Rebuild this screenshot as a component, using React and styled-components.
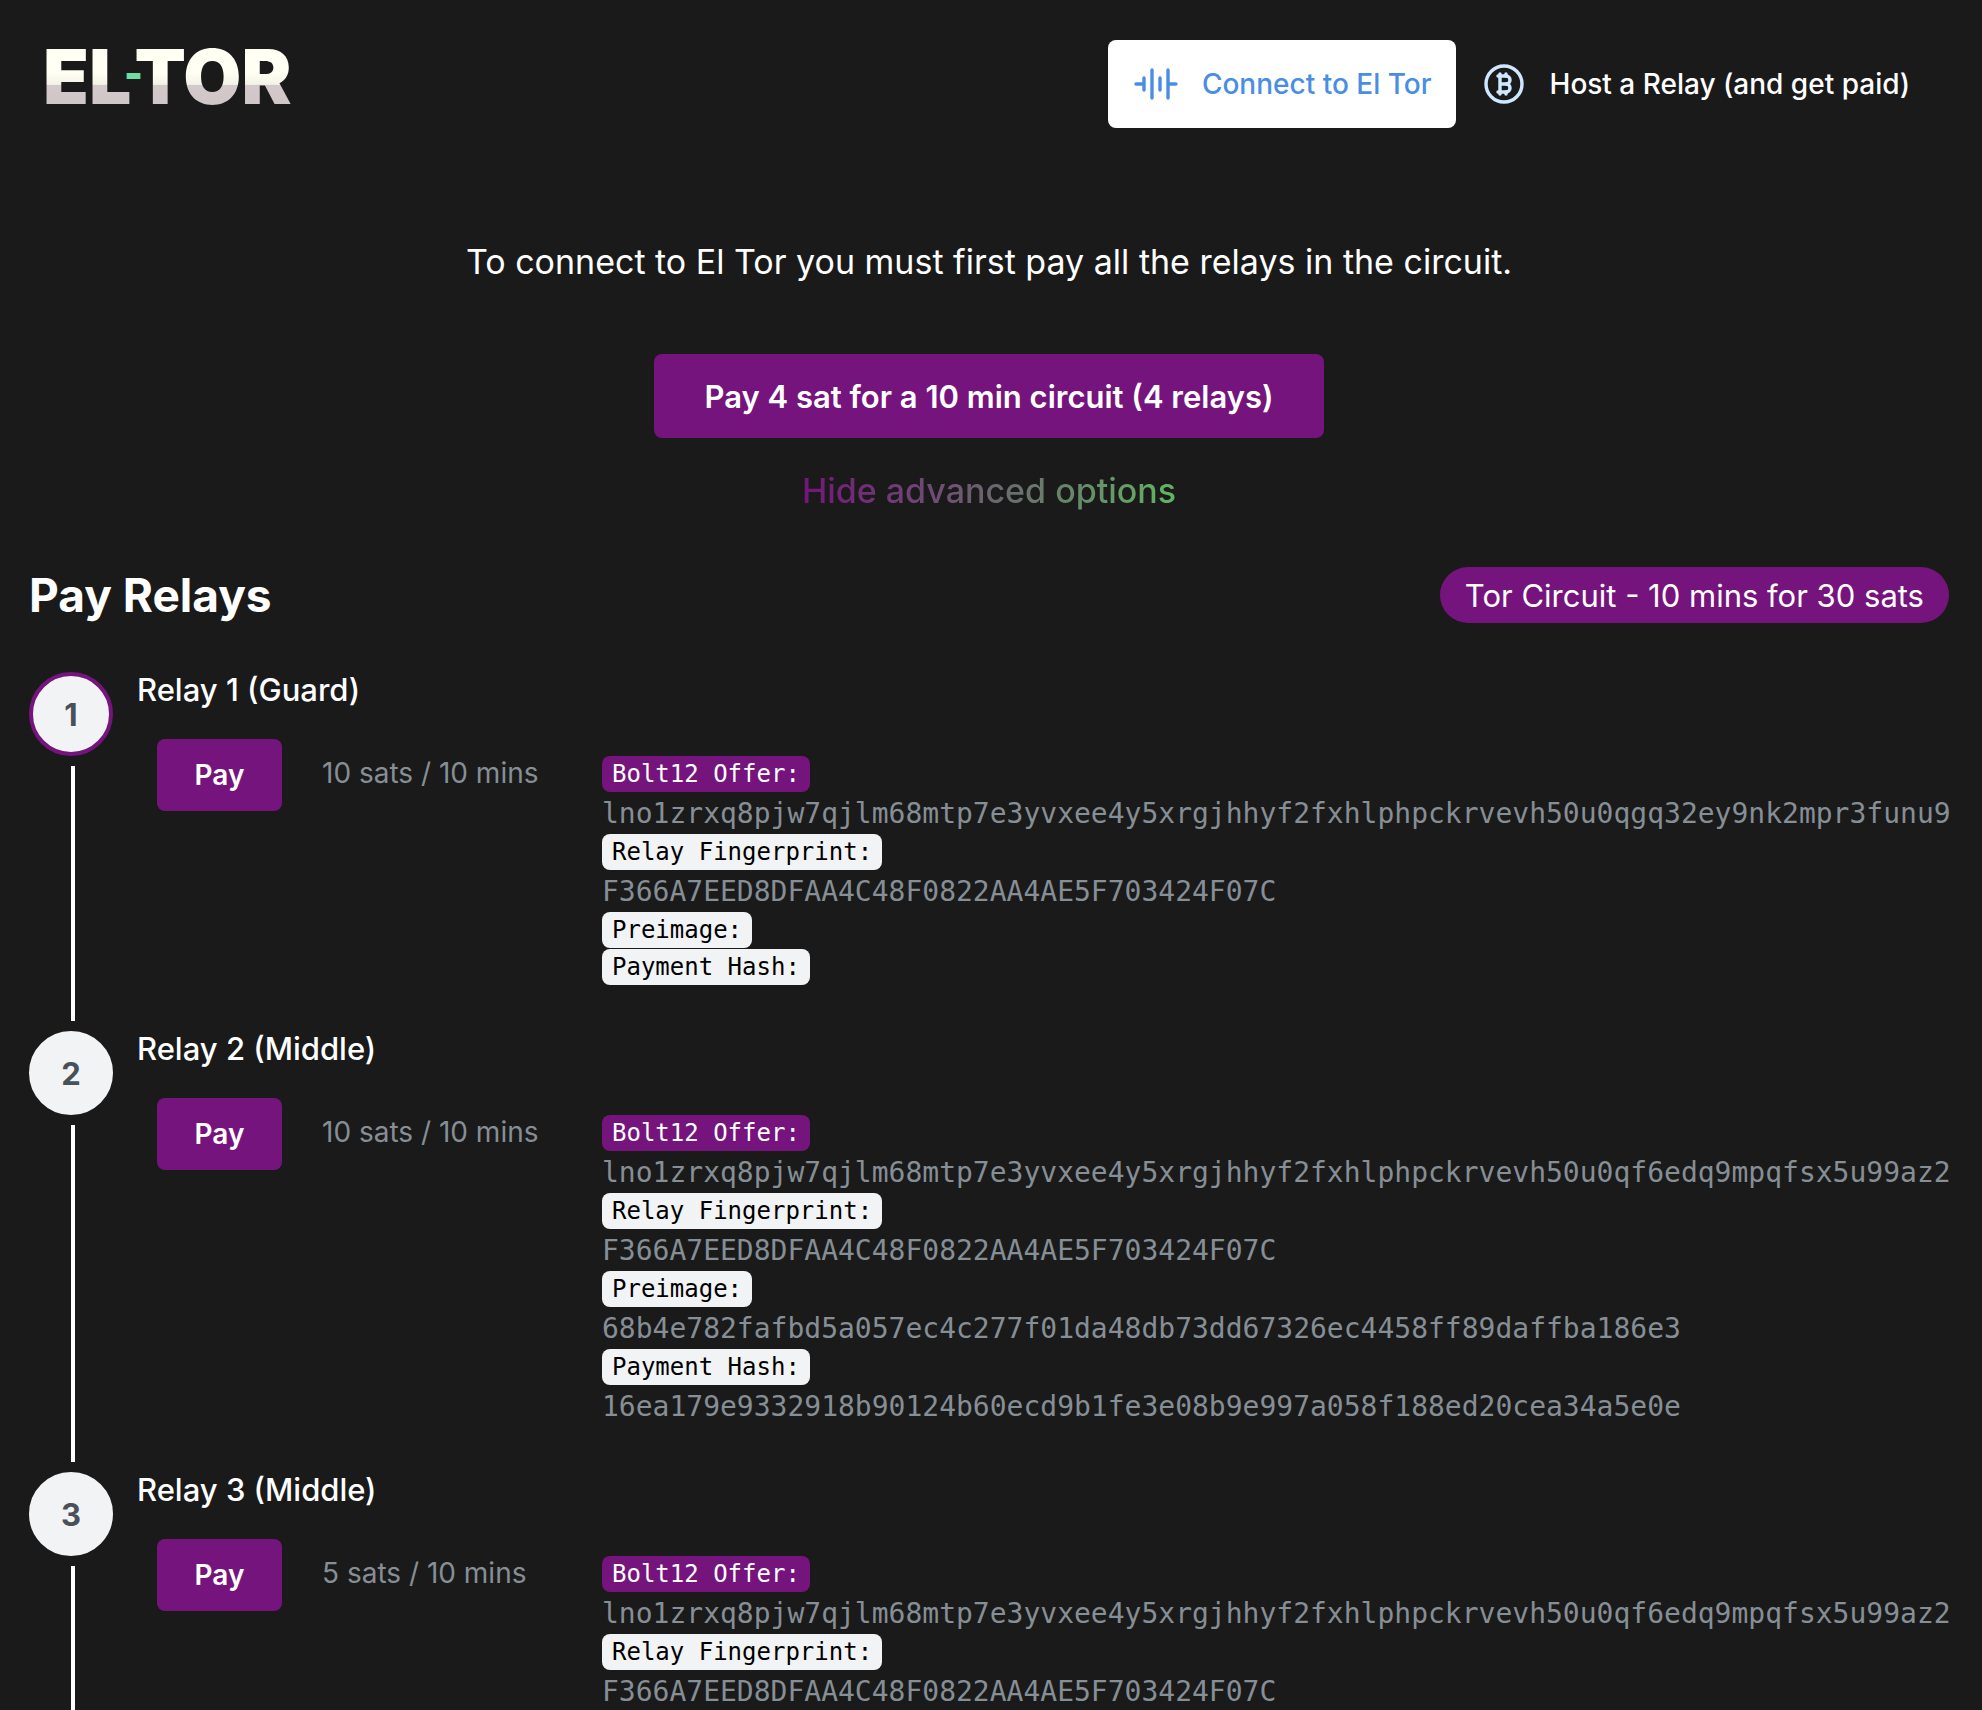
import React from "react";
import styled, { createGlobalStyle } from "styled-components";

const purple = "#75147c";
const sans = `Inter, "Liberation Sans", sans-serif`;
const mono = `"DejaVu Sans Mono", "Liberation Mono", monospace`;

const GlobalStyle = createGlobalStyle`
  *, *::before, *::after { box-sizing: border-box; }
  body {
    margin: 0;
    background: #1a1a1a;
    color: #ffffff;
    font-family: ${sans};
  }
  button { font-family: inherit; border: 0; cursor: pointer; }
`;

const Page = styled.div`
  height: 100vh;
  overflow: hidden;
`;

const Header = styled.header`
  display: flex;
  justify-content: space-between;
  align-items: flex-start;
  padding: 40px 48px 0 43px;
`;

const Logo = styled.a`
  position: relative;
  display: flex;
  gap: 3px;
  font-size: 75px;
  line-height: 74px;
  font-weight: 900;
  text-decoration: none;
`;

const LogoPart = styled.span`
  color: transparent;
  background: linear-gradient(#fffff4 0 44%, #f4f2e6 60%, #d3c8ca 61%, #cfc4c6 100%);
  background-clip: text;
  -webkit-background-clip: text;
`;

const LogoDash = styled.span`
  position: absolute;
  left: 81px;
  top: 0;
  font-size: 40px;
  line-height: 68px;
  color: #6fdca4;
`;

const Nav = styled.nav`
  display: flex;
`;

const NavButton = styled.button`
  display: flex;
  align-items: center;
  gap: 22px;
  height: 88px;
  padding: 0 24px;
  border-radius: 8px;
  font-size: 28px;
  font-weight: 500;
  white-space: nowrap;
  background: ${(p) => (p.$active ? "#ffffff" : "transparent")};
  color: ${(p) => (p.$active ? "#4a8ee4" : "#ffffff")};
`;

const Icon = styled.svg`
  width: 48px;
  height: 48px;
  flex: none;
  fill: none;
  stroke: ${(p) => p.$color};
  stroke-width: 1.7;
  stroke-linecap: round;
  stroke-linejoin: round;
`;

const Hero = styled.section`
  display: flex;
  flex-direction: column;
  align-items: center;
  padding: 110px 32px 0 28px;
`;

const Lead = styled.p`
  margin: 0;
  font-size: 34px;
  line-height: 48px;
`;

const PrimaryButton = styled.button`
  height: 84px;
  margin-top: 68px;
  padding: 0 50px;
  border-radius: 8px;
  background: ${purple};
  color: #ffffff;
  font-size: 31px;
  font-weight: 600;
`;

const ToggleButton = styled.button`
  margin-top: 29px;
  padding: 0;
  font-size: 34px;
  font-weight: 500;
  line-height: 48px;
  color: transparent;
  background: linear-gradient(90deg, ${purple}, #62b562);
  background-clip: text;
  -webkit-background-clip: text;
`;

const Relays = styled.main`
  padding: 51px 33px 0 29px;
`;

const TitleRow = styled.div`
  display: flex;
  justify-content: space-between;
  align-items: center;
`;

const Title = styled.h1`
  margin: 0;
  font-size: 46px;
  line-height: 58px;
  font-weight: 700;
`;

const Pill = styled.span`
  height: 56px;
  padding: 0 25px;
  border-radius: 28px;
  background: ${purple};
  font-size: 31px;
  line-height: 58px;
`;

const Steps = styled.ol`
  list-style: none;
  margin: 48px 0 0;
  padding: 0;
`;

const Step = styled.li`
  display: flex;
  gap: 24px;
`;

const Rail = styled.div`
  display: flex;
  flex-direction: column;
  align-items: center;
  flex: none;
  width: 84px;
`;

const StepNumber = styled.span`
  display: grid;
  place-items: center;
  width: 84px;
  height: 84px;
  flex: none;
  border: 4px solid ${(p) => (p.$current ? purple : "#f1f3f5")};
  border-radius: 50%;
  background: #f1f3f5;
  color: #495057;
  font-size: 31px;
  font-weight: 700;
`;

const Line = styled.span`
  flex: 1;
  width: 4px;
  margin: 10px 0 10px 4px;
  background: #ffffff;
`;

const StepBody = styled.div`
  flex: 1;
  min-width: 0;
  padding-bottom: 45px;
`;

const StepTitle = styled.h2`
  margin: 0;
  font-size: 31px;
  line-height: 36px;
  font-weight: 500;
`;

const StepContent = styled.div`
  display: grid;
  grid-template-columns: 125px 240px minmax(0, 1fr);
  column-gap: 40px;
  align-items: start;
  padding: 31px 0 0 20px;
`;

const PayButton = styled.button`
  height: 72px;
  border-radius: 8px;
  background: ${purple};
  color: #ffffff;
  font-size: 28px;
  font-weight: 600;
`;

const Price = styled.span`
  padding-top: 16px;
  font-size: 28px;
  line-height: 36px;
  color: #868e96;
`;

const Details = styled.dl`
  margin: 0;
  padding-top: 17px;
  font-family: ${mono};
`;

const Term = styled.dt`
  width: fit-content;
  height: 36px;
  margin-bottom: 1px;
  padding: 0 10px;
  border-radius: 8px;
  background: ${(p) => (p.$accent ? purple : "#f1f3f5")};
  color: ${(p) => (p.$accent ? "#ffffff" : "#000000")};
  font-size: 24px;
  line-height: 36px;
`;

const Value = styled.dd`
  margin: 0;
  color: #868e96;
  font-size: 28px;
  line-height: 41px;
  white-space: nowrap;
`;

const offerA = "lno1zrxq8pjw7qjlm68mtp7e3yvxee4y5xrgjhhyf2fxhlphpckrvevh50u0qgq32ey9nk2mpr3funu9";
const offerB = "lno1zrxq8pjw7qjlm68mtp7e3yvxee4y5xrgjhhyf2fxhlphpckrvevh50u0qf6edq9mpqfsx5u99az2";
const fingerprint = "F366A7EED8DFAA4C48F0822AA4AE5F703424F07C";

const relays = [
  { title: "Relay 1 (Guard)", price: "10 sats / 10 mins", offer: offerA },
  {
    title: "Relay 2 (Middle)",
    price: "10 sats / 10 mins",
    offer: offerB,
    preimage: "68b4e782fafbd5a057ec4c277f01da48db73dd67326ec4458ff89daffba186e3",
    hash: "16ea179e9332918b90124b60ecd9b1fe3e08b9e997a058f188ed20cea34a5e0e",
  },
  { title: "Relay 3 (Middle)", price: "5 sats / 10 mins", offer: offerB },
];

function WaveIcon() {
  return (
    <Icon viewBox="0 0 24 24" $color="#4a8ee4" aria-hidden="true">
      <path d="M2 12h4M6 9v6M10 5v14M14 9v6M18 5v14M18 12h4" />
    </Icon>
  );
}

function BitcoinIcon() {
  return (
    <Icon viewBox="0 0 24 24" $color="#d0e8ff" aria-hidden="true">
      <circle cx="12" cy="12" r="9" />
      <path d="M9 8h4.09c1.055 0 1.91 .895 1.91 2s-.855 2-1.91 2c1.055 0 1.91 .895 1.91 2s-.855 2-1.91 2h-4.09" />
      <path d="M10 12h4M10 7v10M13 7v1M13 16v1" />
    </Icon>
  );
}

function Relay({ number, relay }) {
  return (
    <Step>
      <Rail>
        <StepNumber $current={number === 1}>{number}</StepNumber>
        <Line />
      </Rail>
      <StepBody>
        <StepTitle>{relay.title}</StepTitle>
        <StepContent>
          <PayButton type="button">Pay</PayButton>
          <Price>{relay.price}</Price>
          <Details>
            <Term $accent>Bolt12 Offer:</Term>
            <Value>{relay.offer}</Value>
            <Term>Relay Fingerprint:</Term>
            <Value>{fingerprint}</Value>
            <Term>Preimage:</Term>
            {relay.preimage && <Value>{relay.preimage}</Value>}
            <Term>Payment Hash:</Term>
            {relay.hash && <Value>{relay.hash}</Value>}
          </Details>
        </StepContent>
      </StepBody>
    </Step>
  );
}

export default function App() {
  return (
    <Page>
      <GlobalStyle />
      <Header>
        <Logo href="#">
          <LogoPart>EL</LogoPart>
          <LogoDash>-</LogoDash>
          <LogoPart>TOR</LogoPart>
        </Logo>
        <Nav>
          <NavButton type="button" $active>
            <WaveIcon />
            Connect to El Tor
          </NavButton>
          <NavButton type="button">
            <BitcoinIcon />
            Host a Relay (and get paid)
          </NavButton>
        </Nav>
      </Header>
      <Hero>
        <Lead>To connect to El Tor you must first pay all the relays in the circuit.</Lead>
        <PrimaryButton type="button">Pay 4 sat for a 10 min circuit (4 relays)</PrimaryButton>
        <ToggleButton type="button">Hide advanced options</ToggleButton>
      </Hero>
      <Relays>
        <TitleRow>
          <Title>Pay Relays</Title>
          <Pill>Tor Circuit - 10 mins for 30 sats</Pill>
        </TitleRow>
        <Steps>
          {relays.map((relay, i) => (
            <Relay key={relay.title} number={i + 1} relay={relay} />
          ))}
        </Steps>
      </Relays>
    </Page>
  );
}
